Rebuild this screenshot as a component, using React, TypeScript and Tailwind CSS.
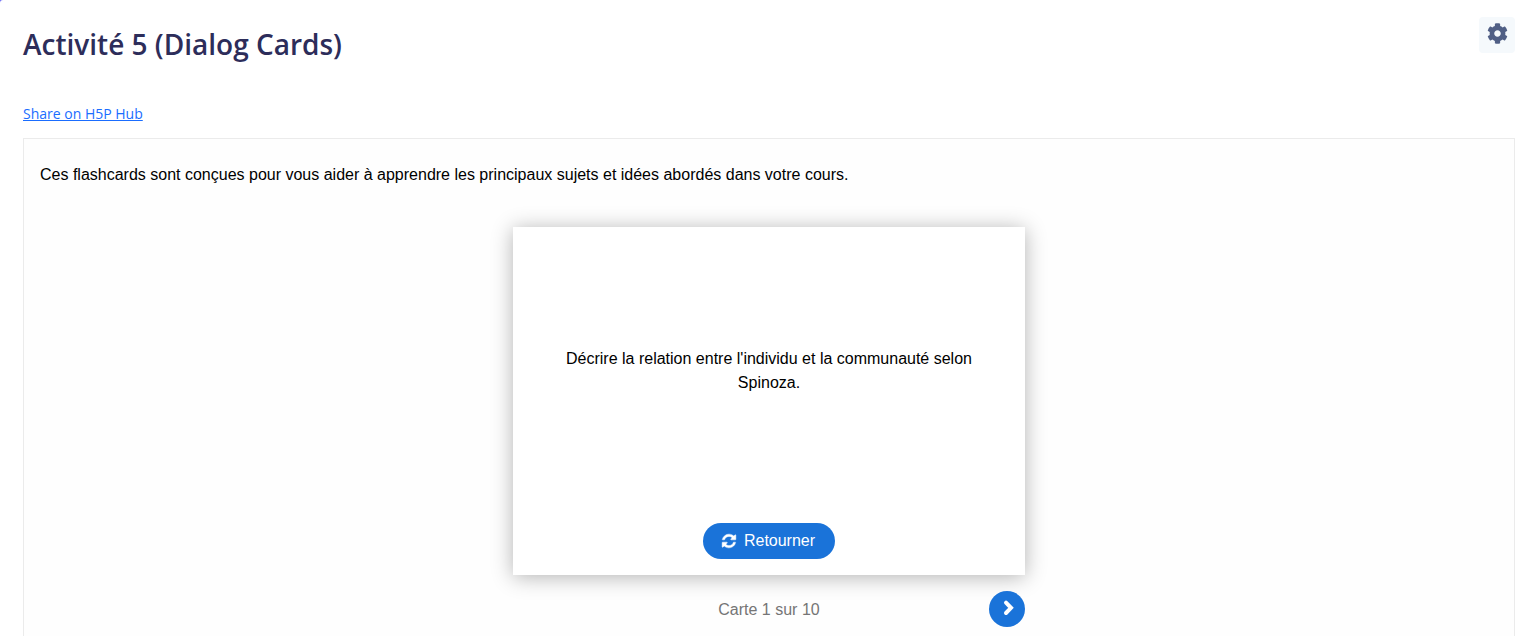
import { FaCog } from "react-icons/fa";

function RefreshIcon() {
  return (
    <svg viewBox="0 0 1792 1792" className="size-4" fill="currentColor" stroke="currentColor" strokeWidth="50" aria-hidden="true">
      <path d="M1639 1056q0 5-1 7-64 268-268 434.5t-478 166.5q-146 0-282.5-55t-243.5-157l-129 129q-19 19-45 19t-45-19-19-45v-448q0-26 19-45t45-19h448q26 0 45 19t19 45-19 45l-137 137q71 66 161 102t187 36q134 0 250-65t186-179q11-17 53-117 8-23 30-23h192q13 0 22.5 9.5t9.5 22.5zm25-800v448q0 26-19 45t-45 19h-448q-26 0-45-19t-19-45 19-45l138-138q-148-137-349-137-134 0-250 65t-186 179q-11 17-53 117-8 23-30 23h-199q-13 0-22.5-9.5t-9.5-22.5v-7q65-268 270-434.5t480-166.5q146 0 284 55.5t245 156.5l130-129q19-19 45-19t45 19 19 45z" />
    </svg>
  );
}

function NextIcon() {
  return (
    <svg viewBox="0 0 36 36" className="size-9" fill="none" stroke="currentColor" strokeWidth="4" strokeLinecap="round" strokeLinejoin="miter" aria-hidden="true">
      <path d="M17 11.6 22 16.8 17 22" />
    </svg>
  );
}

function DialogCard() {
  return (
    <section className="mx-auto flex h-[348px] w-full max-w-[512px] flex-col items-center bg-white px-10 pb-4 shadow-[0_2px_20px_rgba(0,0,0,0.3)]">
      <p className="flex flex-1 items-center pb-2 text-center">
        Décrire la relation entre l'individu et la communauté selon Spinoza.
      </p>
      <button type="button" className="flex h-9 items-center gap-[7px] rounded-full bg-[#1a73d9] pr-5 pl-[18px] text-white">
        <RefreshIcon />
        Retourner
      </button>
    </section>
  );
}

export default function App() {
  return (
    <div className="bg-[#6c6cf5]">
      <div className="flex min-h-screen flex-col rounded-tl-[3px] bg-white pr-[21px] pl-[23px]">
        <header className="flex items-start justify-between pt-[17px]">
          <h1 className="pt-[7px] font-['Open_Sans',sans-serif] text-[28px] leading-10 font-semibold text-[#2d2d5a]">
            Activité 5 (Dialog Cards)
          </h1>
          <button type="button" aria-label="Paramètres" className="flex size-9 items-center justify-center rounded-sm bg-[#f5f9fc] pb-[3px] text-[#505f85]">
            <FaCog className="size-[21px]" />
          </button>
        </header>
        <div className="mt-10 font-['Open_Sans',sans-serif] text-sm leading-5">
          <a href="#hub" className="text-[#1a6dff] underline">
            Share on H5P Hub
          </a>
        </div>
        <main className="mt-[14px] flex-1 border border-b-0 border-[#ebebeb] bg-[#fefefe] px-4 pt-6 font-['Liberation_Sans',sans-serif] text-base leading-6 text-black">
          <p className="mb-10">
            Ces flashcards sont conçues pour vous aider à apprendre les principaux sujets et idées abordés dans votre cours.
          </p>
          <DialogCard />
          <nav className="mx-auto mt-4 grid w-full max-w-[512px] grid-cols-[36px_1fr_36px] items-center pb-2">
            <span className="col-start-2 pt-0.5 text-center text-[#757575]">Carte 1 sur 10</span>
            <button type="button" aria-label="Carte suivante" className="size-9 rounded-full bg-[#1a73d9] text-white">
              <NextIcon />
            </button>
          </nav>
        </main>
      </div>
    </div>
  );
}
